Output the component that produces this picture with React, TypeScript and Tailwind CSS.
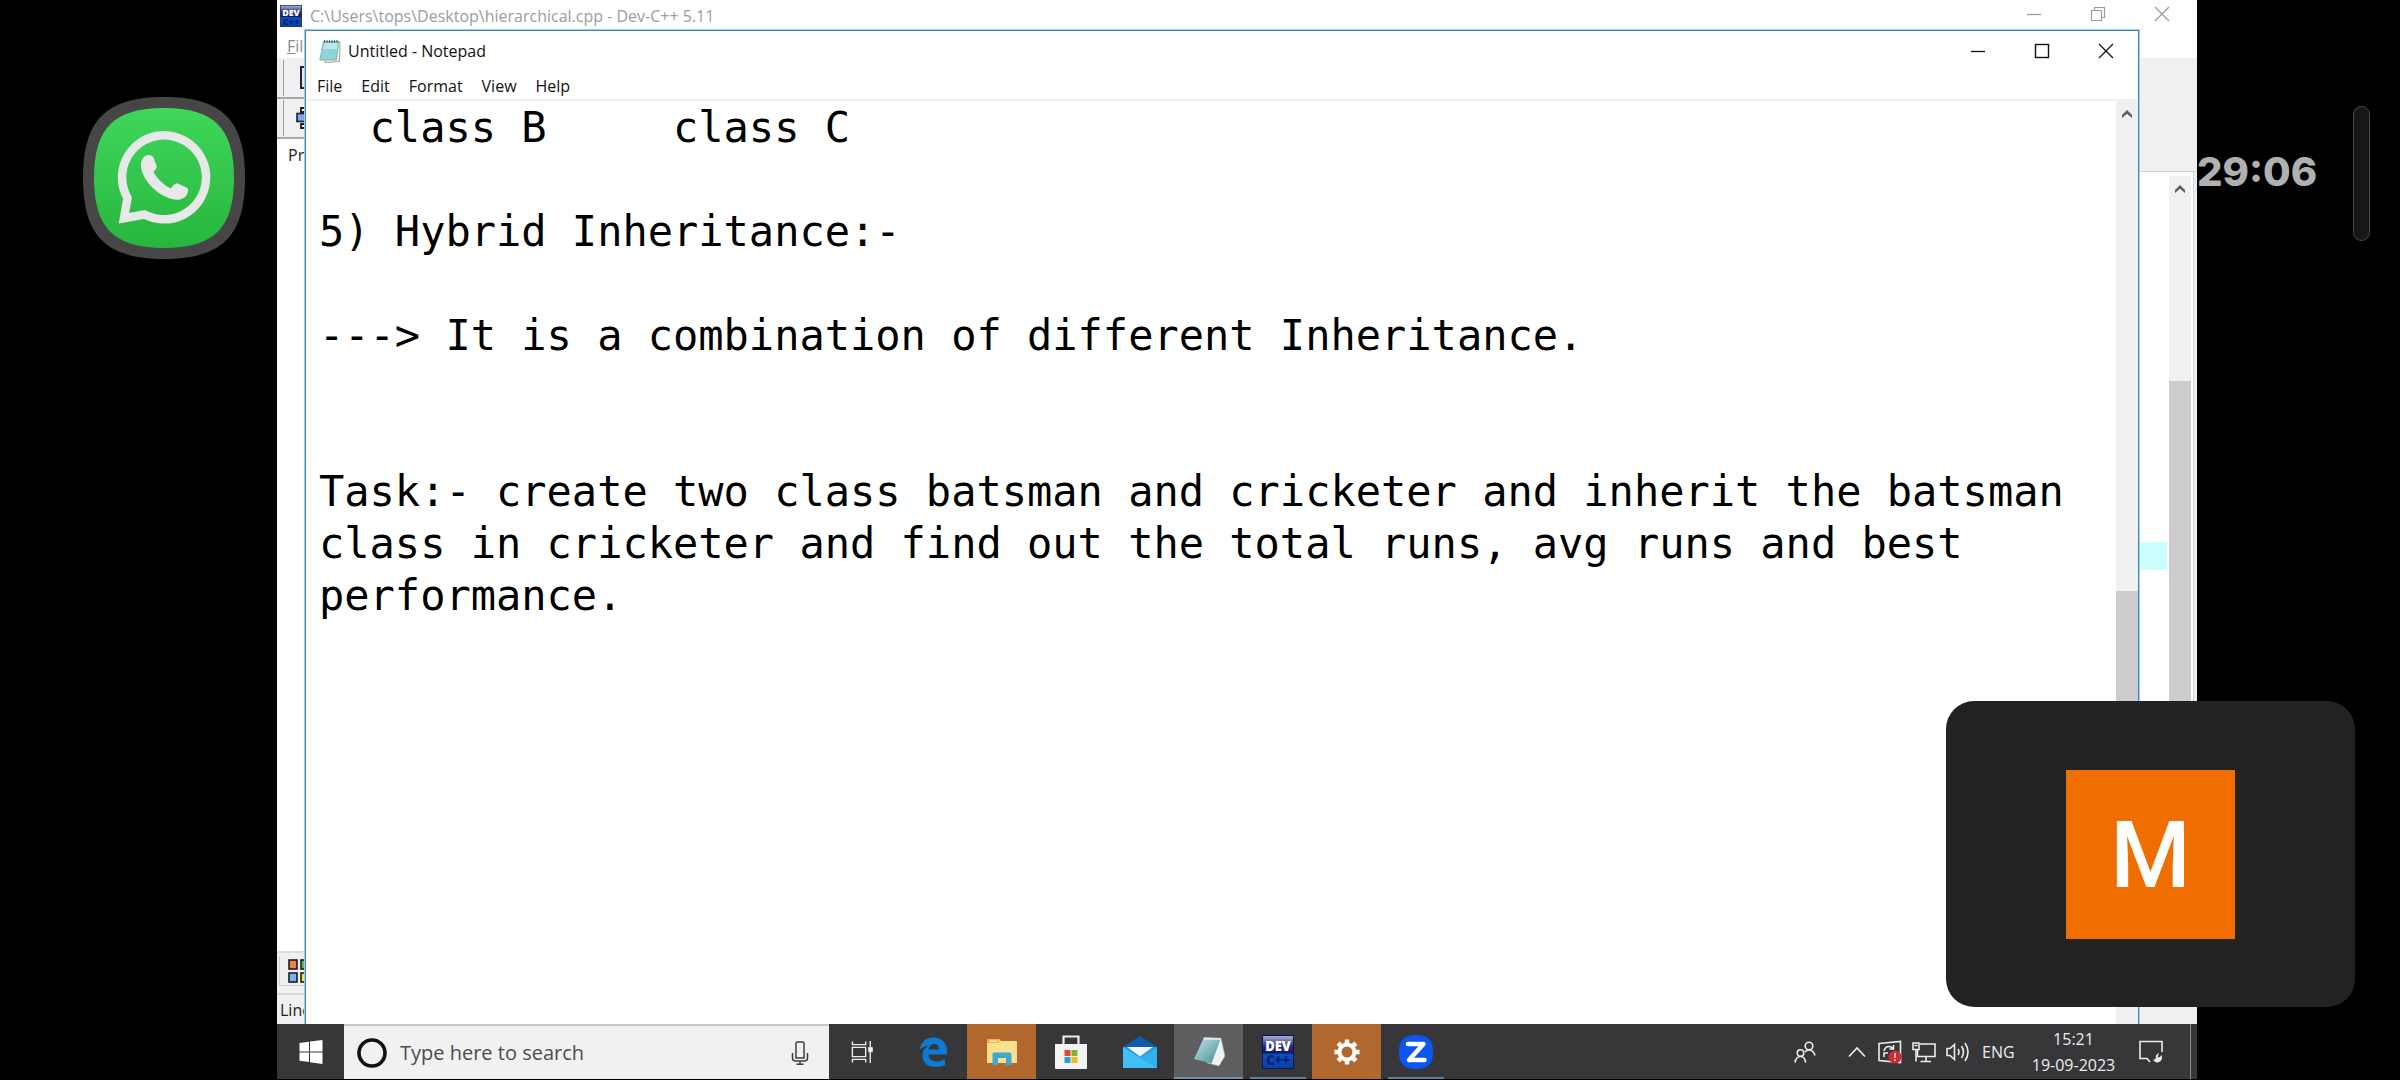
import React from 'react';

const UI_FONT = "font-['Open_Sans','Noto_Sans',sans-serif]";

const NOTE = [
  '  class B     class C',
  '',
  '5) Hybrid Inheritance:-',
  '',
  '---> It is a combination of different Inheritance.',
  '',
  '',
  'Task:- create two class batsman and cricketer and inherit the batsman',
  'class in cricketer and find out the total runs, avg runs and best',
  'performance.',
].join('\n');

const MENUS = ['File', 'Edit', 'Format', 'View', 'Help'];

function WhatsAppIcon() {
  return (
    <svg viewBox="0 0 162 162" className="h-[162px] w-[162px]" aria-hidden="true">
      <defs>
        <linearGradient id="wa" x1="0" y1="0" x2="0" y2="1">
          <stop offset="0" stopColor="#40d75b" />
          <stop offset="1" stopColor="#27b53e" />
        </linearGradient>
      </defs>
      <path d="M81 0C139 0 162 23 162 81S139 162 81 162 0 139 0 81 23 0 81 0Z" fill="#464646" />
      <path d="M81 11C131 11 151 31 151 81S131 151 81 151 11 131 11 81 31 11 81 11Z" fill="url(#wa)" />
      <path d="M44.5 101A42 42 0 1 1 61.5 117.5L41 121.3Z" fill="none" stroke="#e8e8e8" strokeWidth="8.5" />
      <path
        d="M61 60C64 57 69 57.5 70.5 60.5L73.5 68.5C74.5 71 72 73 70.5 75C74 82 81 88 87.5 91.5C89.5 90 91 86.5 94 86.3L102.5 90C106 91.5 105.5 94 104 97.5C101 103 94 103.5 89 102C74 98 60 84 58 70C57.5 66 58.5 62 61 60Z"
        fill="#e8e8e8"
      />
    </svg>
  );
}

function DevIcon({ className }: { className: string }) {
  return (
    <svg viewBox="0 0 32 32" className={className} preserveAspectRatio="none" aria-hidden="true">
      <defs>
        <linearGradient id="dev" x1="0" y1="0" x2="0" y2="1">
          <stop offset="0" stopColor="#b4b8e0" />
          <stop offset="0.3" stopColor="#27357f" />
          <stop offset="0.52" stopColor="#101a5c" />
          <stop offset="0.58" stopColor="#0a4fc4" />
          <stop offset="1" stopColor="#0b3fa8" />
        </linearGradient>
      </defs>
      <rect x="0.5" y="0.5" width="31" height="31" fill="url(#dev)" stroke="#0e1650" />
      <text x="16" y="15.5" textAnchor="middle" fontSize="13" fontWeight="800" fill="#fff" fontFamily="Open Sans, sans-serif">DEV</text>
      <text x="16" y="28.5" textAnchor="middle" fontSize="13" fontWeight="800" fill="#071f6e" fontFamily="Open Sans, sans-serif">C++</text>
    </svg>
  );
}

function NotepadSmallIcon() {
  return (
    <svg viewBox="0 0 22 24" className="h-6 w-[22px]" aria-hidden="true">
      <path d="M5 3H21L20.5 22.5L6 23.5Z" fill="#f7f1dc" stroke="#8d8a78" strokeWidth="0.8" />
      <path d="M4.5 2.5H19.5L17.5 21H0.8Z" fill="#8fd2da" stroke="#6fa9b1" strokeWidth="0.8" />
      <path d="M5.5 4H18.5L17.8 10H4.2Z" fill="#bfe8ed" />
      <path d="M5.5 1V4M8 1V4M10.500 1V4M13 1V4M15.500 1V4M18 1V4" stroke="#51646b" strokeWidth="1.100" />
    </svg>
  );
}

function Minimize() {
  return (
    <svg viewBox="0 0 14 14" className="h-3.5 w-3.5" aria-hidden="true">
      <path d="M0 7.500H14" stroke="currentColor" strokeWidth="1.300" />
    </svg>
  );
}
function Maximize() {
  return (
    <svg viewBox="0 0 16 16" className="h-4 w-4" aria-hidden="true">
      <rect x="1.500" y="1.500" width="13" height="13" fill="none" stroke="currentColor" strokeWidth="1.400" />
    </svg>
  );
}
function Restore() {
  return (
    <svg viewBox="0 0 16 16" className="h-4 w-4" aria-hidden="true">
      <path d="M1.500 4.500H11.500V14.500H1.500ZM4.500 4.500V1.500H14.500V11.500H11.500" fill="none" stroke="currentColor" strokeWidth="1.200" />
    </svg>
  );
}
function Close() {
  return (
    <svg viewBox="0 0 16 16" className="h-4 w-4" aria-hidden="true">
      <path d="M1 1L15 15M15 1L1 15" stroke="currentColor" strokeWidth="1.300" />
    </svg>
  );
}
function ScrollUp() {
  return (
    <svg viewBox="0 0 12 10" className="h-2.5 w-3" aria-hidden="true">
      <path d="M1 9V6L6 1L11 6V9L6 4.800Z" fill="#5c5c5c" />
    </svg>
  );
}

function Caption({ middle }: { middle: React.ReactNode }) {
  return (
    <div className="flex h-full">
      <button aria-label="Minimize" className="flex w-16 items-center justify-center"><Minimize /></button>
      <button aria-label="Resize" className="flex w-16 items-center justify-center">{middle}</button>
      <button aria-label="Close" className="flex w-16 items-center justify-center"><Close /></button>
    </div>
  );
}

function DevWindow() {
  return (
    <section aria-label="Dev-C++" className="flex h-full flex-col bg-white">
      <header className="flex h-[30px] items-start justify-between pl-[3px] text-[#9c9c9c]">
        <div className="flex h-8 items-center gap-2">
          <DevIcon className="h-[22px] w-[22px]" />
          <h1 className="whitespace-nowrap text-base">C:\Users\tops\Desktop\hierarchical.cpp - Dev-C++ 5.11</h1>
        </div>
        <div className="flex h-7 pr-[3px]"><Caption middle={<Restore />} /></div>
      </header>
      <div className="flex h-7 items-end pl-[10px] text-base text-[#8a8a8a]">
        <button><u>F</u>ile</button>
      </div>
      <div className="flex min-h-0 flex-1 justify-between">
        <div className="flex w-20 flex-col">
          <div className="flex h-[41px] items-center border-b-2 border-[#a8a8a8] bg-[#f0eff1] pl-[6px]">
            <span className="h-9 w-px bg-[#9a9a9a]" />
            <svg viewBox="0 0 22 24" className="ml-4 h-6 w-[22px]" aria-hidden="true">
              <rect x="1" y="1" width="18" height="21" fill="#e6e9f5" stroke="#22252c" strokeWidth="2" />
            </svg>
          </div>
          <div className="flex h-10 items-center border-b-2 border-[#a8a8a8] bg-[#f0eff1] pl-[6px]">
            <span className="h-9 w-px bg-[#9a9a9a]" />
            <svg viewBox="0 0 24 24" className="ml-3 h-6 w-6" aria-hidden="true">
              <path d="M5 2H19V6H5ZM5 18H19V22H5Z" fill="#fff" stroke="#1b1e26" strokeWidth="1.800" />
              <rect x="1" y="7.500" width="22" height="8" fill="#7fa5ee" stroke="#1b1e26" strokeWidth="1.600" />
            </svg>
          </div>
          <span className="flex h-8 items-center pl-[11px] text-base text-[#222]">Project</span>
          <div className="flex-1" />
          <div className="flex h-[42px] items-start border-t-2 border-[#dcdcdc] bg-[#f0eff1] pt-[3px] pl-[2px]">
            <div className="flex h-[30px] flex-1 items-center border-b border-l border-[#d2d2d2] bg-[#efeef0] pl-2">
              <svg viewBox="0 0 24 24" className="h-6 w-6" aria-hidden="true">
                <g stroke="#1d1d1d" strokeWidth="1.600">
                  <rect x="1" y="1" width="8" height="9" fill="#e8814b" />
                  <rect x="13" y="1" width="8" height="9" fill="#62b851" />
                  <rect x="1" y="14" width="8" height="9" fill="#7ab0f0" />
                  <rect x="13" y="14" width="8" height="9" fill="#f2ea4e" />
                </g>
              </svg>
            </div>
          </div>
          <div className="flex h-[31px] items-center border-t-2 border-[#d6d6d6] bg-[#f0eff1] pt-px pl-[3px] text-base text-[#222]">Line:</div>
        </div>
        <div className="flex w-[58px] flex-col">
          <div className="h-[113px] bg-[#f0eff2]" />
          <div className="flex flex-1 border-t border-[#cfcfcf]">
            <div className="flex flex-1 flex-col pt-[370px]">
              <div className="h-7 w-7 bg-[#ccfefe]" />
            </div>
            <div className="mt-1 flex w-[22px] flex-col items-center bg-[#f0eff2]">
              <div className="flex h-[205px] pt-2"><ScrollUp /></div>
              <div className="h-[560px] w-full bg-[#cdcbce]" />
            </div>
            <div className="ml-0.5 w-1 border-l border-[#d4d4d4] bg-[#eeeef0]" />
          </div>
          <div className="h-[31px] bg-[#f0eff2]" />
        </div>
      </div>
    </section>
  );
}

function Notepad() {
  return (
    <section
      aria-label="Notepad"
      className="absolute top-[30px] right-[58px] bottom-0 left-7 flex flex-col border-x border-t border-[#3f86b8] bg-white text-[#111] shadow-[0_0_0_1px_#9fd0ee]"
    >
      <header className="flex h-10 items-center justify-between">
        <div className="flex items-center gap-[7px] pl-[13px]">
          <NotepadSmallIcon />
          <h2 className="text-base whitespace-nowrap">Untitled - Notepad</h2>
        </div>
        <Caption middle={<Maximize />} />
      </header>
      <nav className="flex h-[30px] items-center gap-[19px] border-b-2 border-[#f0f0f0] pt-px pl-[11px] text-base">
        {MENUS.map((m) => (
          <button key={m}>{m}</button>
        ))}
      </nav>
      <div className="flex min-h-0 flex-1">
        <textarea
          aria-label="Document text"
          readOnly
          spellCheck={false}
          defaultValue={NOTE}
          className="min-w-0 flex-1 resize-none overflow-hidden pt-px pl-[13px] font-['DejaVu_Sans_Mono',monospace] text-[42px] leading-[52px] whitespace-pre text-black outline-none"
        />
        <div className="flex w-[22px] flex-col items-center bg-[#f0eff1]">
          <div className="flex h-[490px] shrink-0 pt-2"><ScrollUp /></div>
          <div className="h-[260px] w-full bg-[#cdcbce]" />
        </div>
      </div>
    </section>
  );
}

function AppButton({ label, tone = '', line = '', children }: { label: string; tone?: string; line?: string; children: React.ReactNode }) {
  return (
    <button aria-label={label} className={`flex h-full w-[69px] flex-col items-center ${tone}`}>
      <span className="flex flex-1 items-center pt-0.5">{children}</span>
      <span className={`h-0.5 ${line}`} />
    </button>
  );
}

function Taskbar() {
  return (
    <footer className="flex h-14 shrink-0 border-b border-black bg-[#373739] text-[#ececec]">
      <button aria-label="Start" className="flex w-[67px] items-center justify-center">
        <svg viewBox="0 0 24 24" className="h-6 w-6" aria-hidden="true">
          <path d="M0.500 3L10 1.700V11.400H0.500ZM11 1.500L23.500 0V11.400H11ZM0.500 12.500H10V22L0.500 20.700ZM11 12.500H23.500V24L11 22.200Z" fill="#fff" />
        </svg>
      </button>
      <label className="flex w-[485px] items-center border-t-2 border-[#c9c9c9] bg-[#f1f1f1] pr-5 pl-3">
        <svg viewBox="0 0 32 32" className="h-8 w-8" aria-hidden="true">
          <circle cx="16" cy="16" r="13" fill="none" stroke="#111" strokeWidth="3.600" />
        </svg>
        <input
          type="text"
          aria-label="Search"
          placeholder="Type here to search"
          className="ml-3 min-w-0 flex-1 bg-transparent text-xl outline-none placeholder:text-[#4c4c4c]"
        />
        <svg viewBox="0 0 18 24" className="h-6 w-[18px]" fill="none" stroke="#3c3c3c" strokeWidth="1.500" aria-hidden="true">
          <path d="M5 2.500Q5 1 6.500 1H11.500Q13 1 13 2.500V17H5ZM1.500 12V17Q1.500 20 4.500 20H13.500Q16.500 20 16.500 17V12M9 20V23.300M5.500 23.300H12.500" />
        </svg>
      </label>
      <div className="flex">
        <AppButton label="Task View">
          <svg viewBox="0 0 24 24" className="mr-1 h-[22px] w-6" fill="none" stroke="#ececec" strokeWidth="1.500" aria-hidden="true">
            <path d="M1.500 0.500V4H16V0.500M1.500 23.500V20H16V23.500M1.500 7H16V17H1.500ZM21 0V24" />
            <rect x="19.500" y="7.500" width="3.500" height="4" fill="#fff" />
          </svg>
        </AppButton>
        <AppButton label="Edge">
          <svg viewBox="0 0 28 30" className="h-[30px] w-7" aria-hidden="true">
            <path d="M0.500 13C2 5 7 0.500 14.500 0.500C23 0.500 28 6.500 28 14V17.500H9.500C9.800 22.500 14 24.500 18 24.500C21.500 24.500 24 23.500 26 22.300V28C23.500 29.300 20.500 30 17 30C8.500 30 3.500 25.500 3.500 18.500C3.500 14 6 10.500 10 8.500C6 9 2.500 10.500 0.500 13ZM9.700 12.500H20C20 9 18.500 7 15.200 7C12 7 10.200 9.500 9.700 12.500Z" fill="#0c7bd8" />
          </svg>
        </AppButton>
        <AppButton label="File Explorer" tone="bg-[#b1682f]">
          <svg viewBox="0 0 30 26" className="h-[26px] w-[30px]" aria-hidden="true">
            <path d="M0 1Q0 0 1 0H12L14 2H29Q30 2 30 3V24H0Z" fill="#fbe08f" />
            <path d="M0 0H12V4H0Z" fill="#f5b33b" />
            <path d="M3 1.500H10V3H3Z" fill="#fff4cf" />
            <path d="M5.500 26V15Q5.500 13.500 7 13.500H23Q24.500 13.500 24.500 15V26H19V19H11V26Z" fill="#3fa9cf" />
          </svg>
        </AppButton>
        <AppButton label="Store">
          <svg viewBox="0 0 34 34" className="h-[34px] w-[34px]" aria-hidden="true">
            <path d="M9.500 12V1.500H24.500V12" fill="none" stroke="#eee" strokeWidth="2.200" />
            <path d="M1 9H33V33Q33 34 32 34H2Q1 34 1 33Z" fill="#f4f4f4" />
            <rect x="10.500" y="15" width="6" height="6" fill="#e0492a" />
            <rect x="17.500" y="15" width="6" height="6" fill="#85b22c" />
            <rect x="10.500" y="22" width="6" height="6" fill="#26a0dd" />
            <rect x="17.500" y="22" width="6" height="6" fill="#f4b81f" />
          </svg>
        </AppButton>
        <AppButton label="Mail">
          <svg viewBox="0 0 34 32" className="h-8 w-[34px]" aria-hidden="true">
            <path d="M0 11L17 0L34 11V14H0Z" fill="#0f5ca8" />
            <path d="M0 11H34V32H0Z" fill="#2196dd" />
            <path d="M0 11L34 32H0Z" fill="#42c0f6" />
            <path d="M34 11L17 21.500L34 32Z" fill="#31b0ee" />
            <path d="M4 11H30L17 20.500Z" fill="#f3f6f9" />
          </svg>
        </AppButton>
        <AppButton label="Notepad" tone="bg-[#5e5e60]" line="w-full bg-[#6f93b0]">
          <svg viewBox="0 0 32 32" className="h-8 w-8" aria-hidden="true">
            <defs>
              <linearGradient id="np" x1="0" y1="0" x2="1" y2="1">
                <stop offset="0" stopColor="#c9e7ea" />
                <stop offset="1" stopColor="#3d8b97" />
              </linearGradient>
            </defs>
            <path d="M28 2L32 20L26 30L14 27Z" fill="#eef3f3" stroke="#a9a48c" strokeWidth="0.600" />
            <path d="M11 1.500L28 2L18.500 27.500L1 23Z" fill="url(#np)" />
            <path d="M11 1.500L28 2L27.300 4L10.200 3.500Z" fill="#dfe9e9" />
          </svg>
        </AppButton>
        <AppButton label="Dev-C++" line="w-14 bg-[#5f809c]"><DevIcon className="h-[34px] w-8" /></AppButton>
        <AppButton label="Settings" tone="bg-[#b1682f]">
          <svg viewBox="0 0 28 28" className="h-7 w-7" fill="none" stroke="#fff" aria-hidden="true">
            <circle cx="14" cy="14" r="7.500" strokeWidth="4" />
            <path d="M14 1.500V5M14 23V26.500M1.500 14H5M23 14H26.500M5.200 5.200L7.600 7.600M20.400 20.400L22.800 22.800M5.200 22.800L7.600 20.400M20.400 7.600L22.800 5.200" strokeWidth="4.500" />
          </svg>
        </AppButton>
        <AppButton label="Zoom" line="w-14 bg-[#5f809c]">
          <svg viewBox="0 0 34 34" className="h-[34px] w-[34px]" aria-hidden="true">
            <path d="M17 0C29 0 34 5 34 17S29 34 17 34 0 29 0 17 5 0 17 0Z" fill="#0b55f0" />
            <path d="M9 9H24.500L10 25H25.500" fill="none" stroke="#fff" strokeWidth="4.500" strokeLinejoin="round" strokeLinecap="round" />
          </svg>
        </AppButton>
      </div>
      <div className="flex-1" />
      <div className="flex items-center">
        <button aria-label="People" className="mr-8">
          <svg viewBox="0 0 22 22" className="h-[22px] w-[22px]" fill="none" stroke="#ececec" strokeWidth="1.600" aria-hidden="true">
            <circle cx="15" cy="5" r="3.800" />
            <circle cx="6.500" cy="12" r="3.300" />
            <path d="M1 21.500Q2 15.500 6.500 15.500T11.500 21.500M11 11Q12.500 9 15 9Q19.500 9 21 14.500" />
          </svg>
        </button>
        <button aria-label="Show hidden icons" className="mr-3">
          <svg viewBox="0 0 18 12" className="h-3 w-[18px]" fill="none" stroke="#ececec" strokeWidth="1.700" aria-hidden="true">
            <path d="M1 10.500L9 2L17 10.500" />
          </svg>
        </button>
        <button aria-label="Updates" className="mr-[10px]">
          <svg viewBox="0 0 24 24" className="h-6 w-6" fill="none" stroke="#ececec" strokeWidth="1.600" aria-hidden="true">
            <path d="M1 3.500L22.500 1.500V22.500L1 20.500Z" />
            <path d="M6 11Q7 6.500 11 6.500Q13.500 6.500 15 8.500M15.500 5V9H11.500M6 17V13H10" />
            <circle cx="17" cy="17" r="6.500" fill="#dc2430" stroke="none" />
            <path d="M17 13V18M17 19.500V21" stroke="#fff" />
          </svg>
        </button>
        <button aria-label="Network" className="mr-[10px]">
          <svg viewBox="0 0 24 22" className="h-[22px] w-6" fill="none" stroke="#ececec" strokeWidth="1.600" aria-hidden="true">
            <path d="M8 3H23V15.500H5.500V8M14 15.500V20M8.500 20.500H19" />
            <path d="M1 2H7V8.500H1ZM2.500 4.500H5.500M4 8.500V20.500" />
          </svg>
        </button>
        <button aria-label="Volume" className="mr-3">
          <svg viewBox="0 0 24 22" className="h-[22px] w-6" fill="none" stroke="#ececec" strokeWidth="1.600" aria-hidden="true">
            <path d="M1 7.500H4L8.500 3.500V18.500L4 14.500H1ZM12 8Q14 11 12 14M15.500 5Q19.500 11 15.500 17M19 2Q25 11 19 20" />
          </svg>
        </button>
        <span className="w-8 text-base">ENG</span>
        <div className="ml-4 flex w-[87px] flex-col items-center text-base leading-[26px] whitespace-nowrap">
          <time>15:21</time>
          <time>19-09-2023</time>
        </div>
        <button aria-label="Notifications" className="mr-[27px] ml-[22px]">
          <svg viewBox="0 0 24 24" className="h-6 w-6" fill="none" stroke="#ececec" strokeWidth="1.600" aria-hidden="true">
            <path d="M23 12V1.500H1V18.500H8L11 22" />
            <path d="M20 13Q16 15 17 18Q15.500 20 14 20Q17 24 21 21.500Q24 19 22.500 15Q20.500 18 18.500 17.500" fill="#ececec" stroke="none" />
          </svg>
        </button>
        <span className="mr-1.5 h-full w-px bg-[#8c8c8c]" />
      </div>
    </footer>
  );
}

export default function App() {
  return (
    <div className={`relative flex h-screen overflow-hidden bg-black ${UI_FONT}`}>
      <aside className="w-[277px] shrink-0 pt-[97px] pl-[83px]">
        <button aria-label="WhatsApp" className="block"><WhatsAppIcon /></button>
      </aside>
      <main className="flex min-w-0 flex-1 flex-col">
        <div className="relative min-h-0 flex-1 overflow-hidden">
          <DevWindow />
          <Notepad />
        </div>
        <Taskbar />
      </main>
      <aside className="flex w-[203px] shrink-0 items-start justify-between pr-[30px]">
        <time className="pt-[147px] font-['Inter',sans-serif] text-[40px] leading-[50px] font-extrabold text-[#b0b0b0]">29:06</time>
        <div className="mt-[106px] h-[135px] w-[17px] rounded-full border border-[#4a4a4a] bg-[#171717]" />
      </aside>
      <section
        aria-label="Participant"
        className="absolute right-[45px] bottom-[73px] flex h-[306px] w-[409px] items-center justify-center rounded-[28px] bg-[#222]"
      >
        <div className="flex h-[169px] w-[169px] items-center justify-center bg-[#f06e00] pt-1 font-['Roboto',sans-serif] text-[92px] leading-none font-medium text-white">
          M
        </div>
      </section>
    </div>
  );
}
